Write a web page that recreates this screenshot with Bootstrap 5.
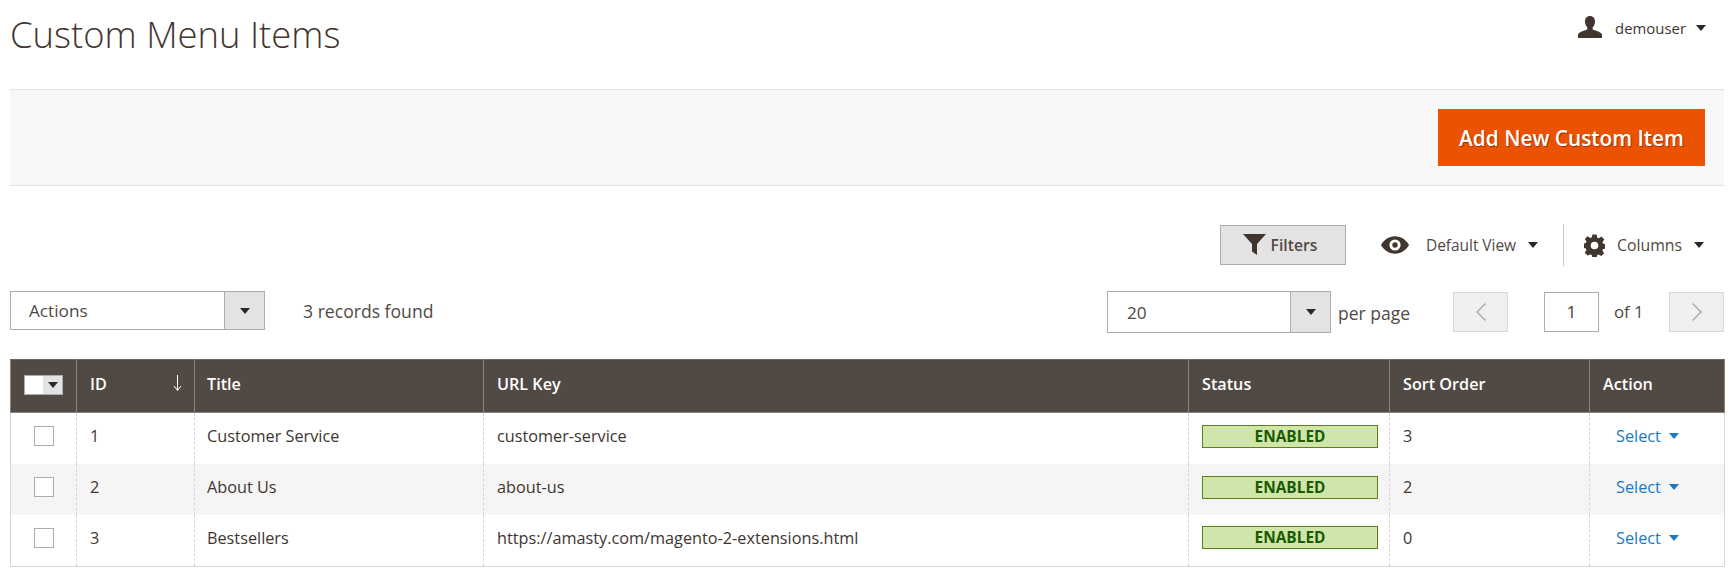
<!DOCTYPE html>
<html lang="en">
<head>
    <meta charset="UTF-8">
    <meta name="viewport" content="width=device-width, initial-scale=1.0">
    <title>Custom Menu Items</title>
    <link href="https://cdn.jsdelivr.net/npm/bootstrap@5.3.3/dist/css/bootstrap.min.css" rel="stylesheet">
    <style>
        body { font-family: "Open Sans", "Liberation Sans", sans-serif; font-size: 16px; color: #41362f; background: #fff; }
        .page-wrap { padding: 0 12px 0 10px; }
        .top-bar { height: 89px; }
        .page-title { font-size: 36.4px; font-weight: 300; line-height: 1.2; color: #41362f; margin: 13px 0 0; }
        .user-menu { margin: 16px 18px 0 0; font-size: 14.9px; height: 24px; color: #41362f; }
        .user-menu svg { margin: 0 12px 2px 0; }
        .user-menu .arrow-down { margin-left: 10px; }
        .arrow-down { display: inline-block; width: 0; height: 0; border-left: 5.5px solid transparent; border-right: 5.5px solid transparent; border-top: 6px solid #2f2721; }
        .arrow-blue { border-top-color: #1979c3; margin-left: 8px; position: relative; top: -3px; }
        .action-band { height: 97px; background: #f8f8f8; border-top: 1px solid #e3e3e3; border-bottom: 1px solid #e3e3e3; padding-right: 19px; }
        .btn-add { background: #eb5202; border: 0; border-radius: 0; color: #fff; font-weight: 600; font-size: 20.8px; width: 267px; height: 57px; padding: 2px 0 0; text-shadow: 1px 1px 1px rgba(0,0,0,.35); }
        .view-row { margin-top: 39px; height: 40px; padding-right: 20px; }
        .btn-filters { width: 126px; height: 40px; padding: 1px 6px 0 0; background: #e3e3e3; border: 1px solid #adadad; border-radius: 0; color: #514943; font-weight: 600; font-size: 15.7px; }
        .btn-filters svg { margin-right: 5px; vertical-align: -4px; }
        .view-switch { margin-left: 35px; font-size: 15.5px; letter-spacing: -.05px; color: #514943; }
        .view-switch span { margin-top: 2px; }
        .view-switch .arrow-down { margin-left: 12px; }
        .eye-icon { margin-right: 17px; }
        .view-sep { width: 1px; height: 42px; background: #ccc; margin-left: 25px; }
        .gear-icon { margin-right: 12px; }
        .view-switch.cols-switch { margin-left: 20px; letter-spacing: 0; font-size: 15.8px; }
        .pager-row { margin-top: 26px; height: 42px; }
        .pick-box { display: flex; border: 1px solid #adadad; background: #fff; }
        .pick-value { flex: 1; padding-left: 18px; font-size: 17.2px; color: #514943; display: flex; align-items: center; }
        .pick-arrow { width: 40px; background: #e3e3e3; border-left: 1px solid #adadad; display: flex; align-items: center; justify-content: center; }
        .actions-box { width: 255px; height: 39px; }
        .records-text { margin: 0 0 1px 38px; font-size: 17.6px; color: #514943; }
        .size-box { width: 224px; height: 42px; }
        .size-box .pick-value { padding: 1px 0 0 19px; }
        .per-page { margin: 2px 43px 0 7px; font-size: 17.5px; color: #514943; }
        .page-btn { width: 55px; height: 40px; background: #f0f0f0; border: 1px solid #d9d9d9; border-radius: 0; padding: 0; display: flex; align-items: center; justify-content: center; }
        .page-num { width: 55px; height: 40px; border: 1px solid #adadad; text-align: center; font-size: 16.5px; color: #41362f; margin: 0 15px 0 36px; line-height: 38px; }
        .page-of { width: 55px; font-size: 16.8px; color: #514943; }
        .grid-table { margin: 26px 0 0; table-layout: fixed; border-collapse: collapse; font-size: 16.25px; width: 1714px; }
        .grid-table th { background: #514943; color: #fff; font-weight: 600; height: 53px; padding: 0 13px 3px; border: 1px solid #8a837f; border-top: 1px solid #6d6560; vertical-align: middle; font-size: 16.2px; }
        .grid-table td { height: 51px; padding: 0 13px 4px; vertical-align: middle; color: #41362f; border: 0; border-left: 1px dashed #d6d6d6; border-right: 1px dashed #d6d6d6; background: #fff; box-shadow: none; }
        .grid-table th:nth-child(3), .grid-table td:nth-child(3) { padding-left: 12px; }
        .grid-table tbody tr:nth-child(2) td { background: #f5f5f5; }
        .grid-table td:first-child { border-left: 1px solid #d6d6d6; text-align: center; }
        .grid-table td:last-child { border-right: 1px solid #d6d6d6; padding-left: 26px; }
        .grid-table tbody tr:last-child td { border-bottom: 1px solid #d6d6d6; height: 52px; padding-bottom: 5px; }
        .mass-check { width: 39px; height: 20px; margin: 0 auto; border: 1px solid #adadad; background: #fff; display: flex; }
        .mass-check span { margin-left: auto; width: 19px; background: #e3e3e3; display: flex; align-items: center; justify-content: center; }
        .mass-check .arrow-down { width: 0; border-left-width: 5px; border-right-width: 5px; border-top-width: 6px; background: none; }
        .row-check { display: block; width: 20px; height: 20px; margin: 0 auto; border: 1px solid #adadad; background: #fff; }
        .sort-arrow { float: right; margin: 3px -1px 0 0; }
        .status-tag { display: block; height: 23px; line-height: 21px; margin-right: -2px; background: #d0e5a9; border: 1px solid #5b8116; color: #185b00; font-weight: 700; font-size: 15.4px; text-align: center; }
        .select-link { color: #1979c3; text-decoration: none; }
        .c-check { width: 66px; } .c-id { width: 118px; } .c-title { width: 289px; } .c-url { width: 705px; }
        .c-status { width: 201px; } .c-sort { width: 200px; } .c-action { width: 135px; }
    </style>
</head>
<body>
    <div class="page-wrap">
        <div class="top-bar d-flex justify-content-between align-items-start">
            <h1 class="page-title">Custom Menu Items</h1>
            <div class="user-menu d-flex align-items-center">
                <svg width="26" height="22" viewBox="0 0 26 22"><path fill="#41362f" d="M13 0c3.200 0 5 2.300 5 5.400 0 2.400-.9 4.500-2.300 5.800v2.200c1.500.9 8.800 2.300 9.300 5.200V22H1v-3.400c.5-2.900 7.800-4.300 9.300-5.200v-2.200C8.900 9.900 8 7.800 8 5.400 8 2.300 9.800 0 13 0z"/></svg>
                <span>demouser</span>
                <i class="arrow-down"></i>
            </div>
        </div>

        <div class="action-band d-flex justify-content-end align-items-center">
            <button type="button" class="btn btn-add">Add New Custom Item</button>
        </div>

        <div class="view-row d-flex justify-content-end align-items-center">
            <button type="button" class="btn btn-filters">
                <svg width="23" height="21" viewBox="0 0 23 21"><path fill="#41362f" d="M0 0h23L14 10v11l-5-3.500V10z"/></svg>Filters
            </button>
            <div class="view-switch d-flex align-items-center">
                <svg class="eye-icon" width="28" height="18" viewBox="0 0 29 18"><path fill="#41362f" fill-rule="evenodd" d="M14.500 0C21 0 26.500 4.200 29 9c-2.500 4.800-8 9-14.500 9S2.500 13.800 0 9C2.500 4.200 8 0 14.500 0zm0 3.200a5.800 5.800 0 1 0 0 11.600 5.800 5.800 0 0 0 0-11.600zm0 3a2.800 2.800 0 1 1 0 5.600 2.800 2.800 0 0 1 0-5.600z"/></svg>
                <span>Default View</span>
                <i class="arrow-down"></i>
            </div>
            <div class="view-sep"></div>
            <div class="view-switch cols-switch d-flex align-items-center">
                <svg class="gear-icon" width="21" height="23" viewBox="0 0 22 23"><path fill="#41362f" fill-rule="evenodd" d="M8.800 0h4.400l.6 3.100 1.700.8L18.300 2l3 3.200-1.900 2.600.6 1.800 3 .6v4.400l-3 .6-.7 1.800 1.800 2.600-3 3-2.700-1.800-1.700.7-.5 3H8.800l-.6-3-1.700-.7L3.800 22l-3-3 1.800-2.700-.7-1.700-2.900-.6V9.600l3-.6.6-1.700L.8 4.800l3-3 2.700 1.800 1.700-.7zM11 7.500a4 4 0 1 0 0 8 4 4 0 0 0 0-8z"/></svg>
                <span>Columns</span>
                <i class="arrow-down"></i>
            </div>
        </div>

        <div class="pager-row d-flex align-items-center">
            <div class="pick-box actions-box align-self-start">
                <div class="pick-value">Actions</div>
                <div class="pick-arrow"><i class="arrow-down"></i></div>
            </div>
            <div class="records-text">3 records found</div>
            <div class="pick-box size-box ms-auto">
                <div class="pick-value">20</div>
                <div class="pick-arrow"><i class="arrow-down"></i></div>
            </div>
            <div class="per-page">per page</div>
            <button type="button" class="btn page-btn">
                <svg width="12" height="20" viewBox="0 0 12 20"><path fill="none" stroke="#adadad" stroke-width="1.500" d="M10.500 1.500 2 10l8.500 8.500"/></svg>
            </button>
            <div class="page-num">1</div>
            <div class="page-of">of 1</div>
            <button type="button" class="btn page-btn">
                <svg width="12" height="20" viewBox="0 0 12 20"><path fill="none" stroke="#adadad" stroke-width="1.500" d="M1.500 1.500 10 10l-8.500 8.500"/></svg>
            </button>
        </div>

        <table class="table grid-table">
            <colgroup>
                <col class="c-check"><col class="c-id"><col class="c-title"><col class="c-url"><col class="c-status"><col class="c-sort"><col class="c-action">
            </colgroup>
            <thead>
                <tr>
                    <th><div class="mass-check"><span><i class="arrow-down"></i></span></div></th>
                    <th>ID <svg class="sort-arrow" width="9" height="16" viewBox="0 0 9 16"><path fill="none" stroke="#fff" stroke-width="1" d="M4.500 0v15M1 11l3.500 4.500L8 11"/></svg></th>
                    <th>Title</th>
                    <th>URL Key</th>
                    <th>Status</th>
                    <th>Sort Order</th>
                    <th>Action</th>
                </tr>
            </thead>
            <tbody id="grid-rows"></tbody>
        </table>
    </div>

    <script>
        const rows = [
            { id: 1, title: 'Customer Service', url: 'customer-service', sort: 3 },
            { id: 2, title: 'About Us', url: 'about-us', sort: 2 },
            { id: 3, title: 'Bestsellers', url: 'https://amasty.com/magento-2-extensions.html', sort: 0 }
        ];
        document.getElementById('grid-rows').innerHTML = rows.map(r => `
            <tr>
                <td><span class="row-check"></span></td>
                <td>${r.id}</td>
                <td>${r.title}</td>
                <td>${r.url}</td>
                <td><span class="status-tag">ENABLED</span></td>
                <td>${r.sort}</td>
                <td><a class="select-link" href="#">Select<i class="arrow-down arrow-blue"></i></a></td>
            </tr>`).join('');
    </script>
    <script src="https://cdn.jsdelivr.net/npm/bootstrap@5.3.3/dist/js/bootstrap.bundle.min.js"></script>
</body>
</html>
